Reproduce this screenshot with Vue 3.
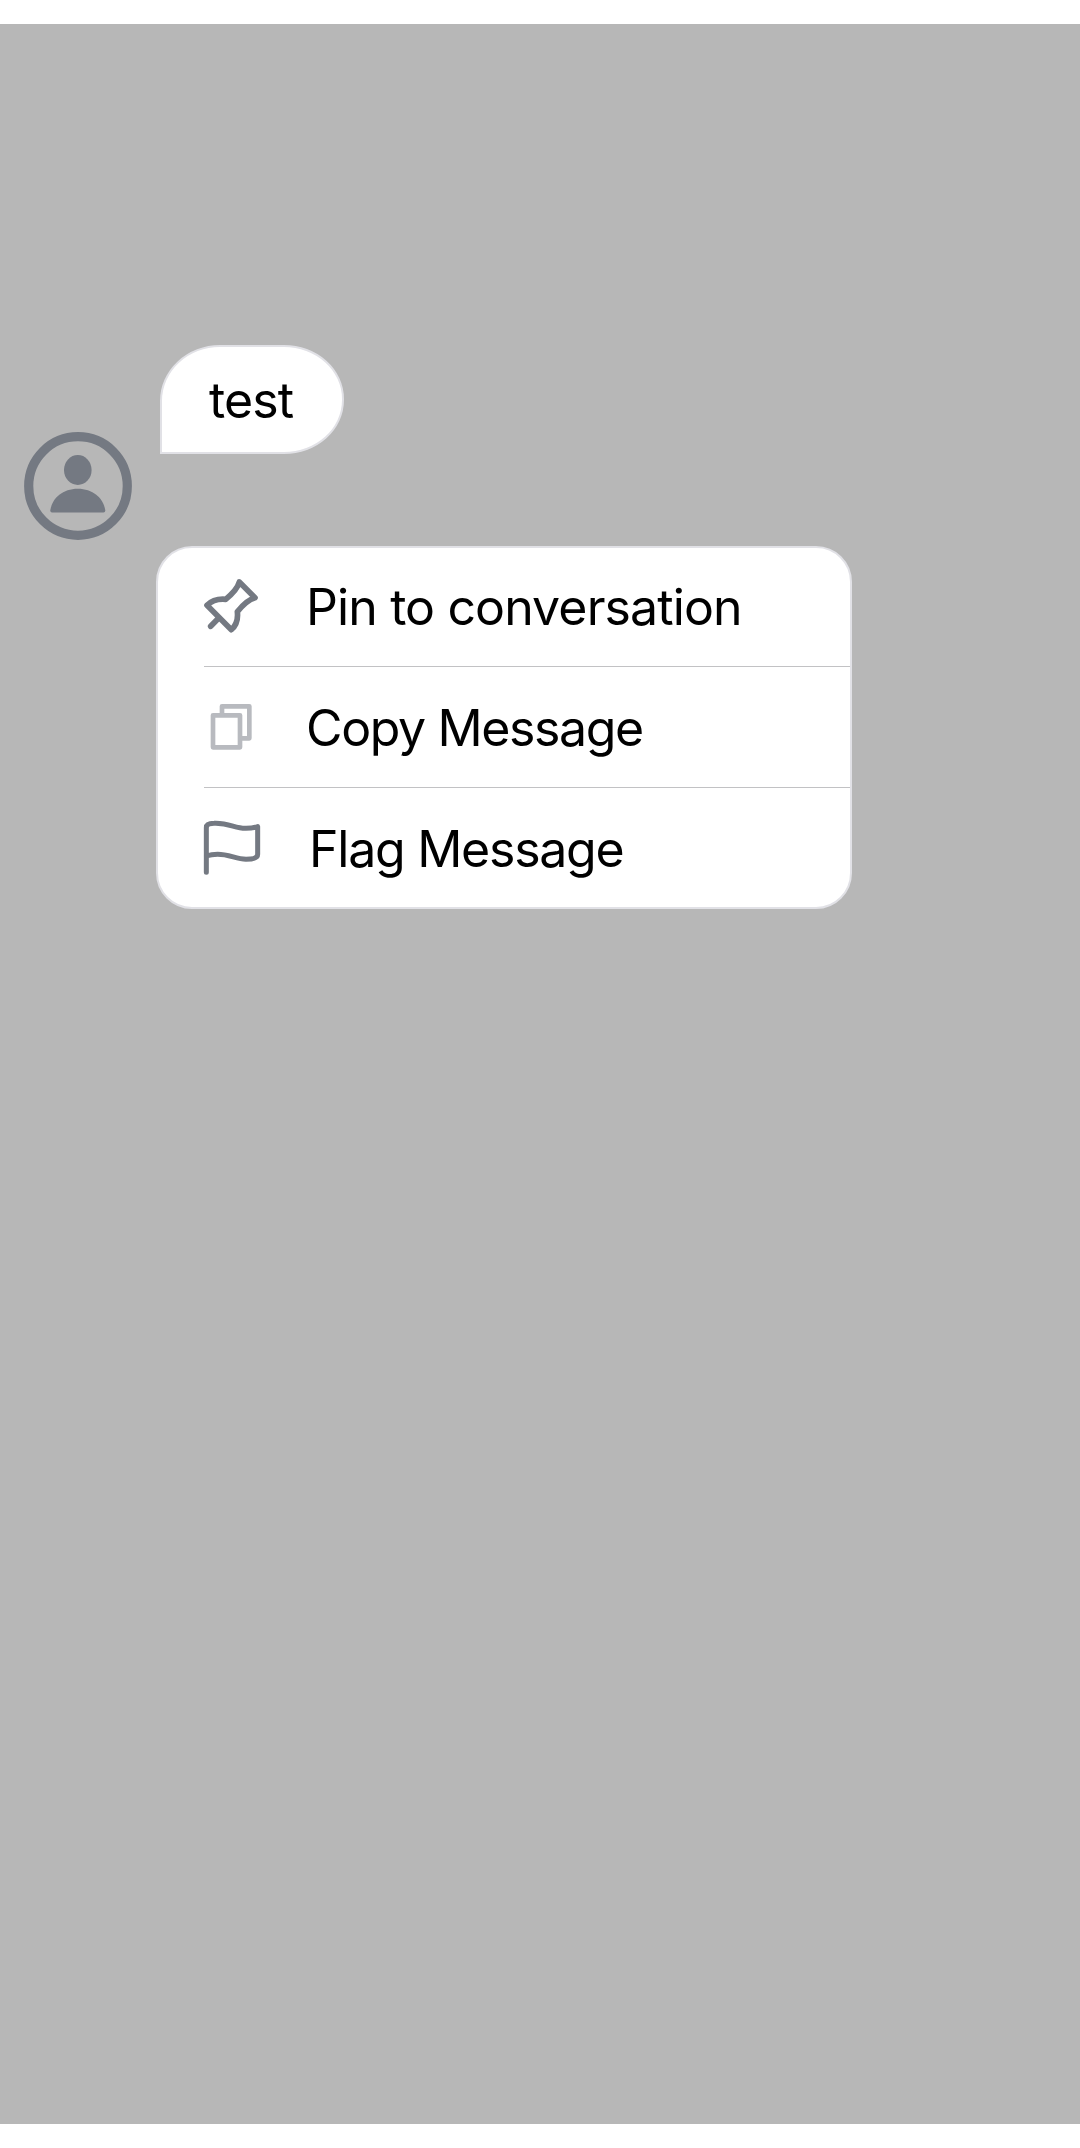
<script setup>
const actions = [
  { id: 'pin', label: 'Pin to conversation' },
  { id: 'copy', label: 'Copy Message' },
  { id: 'flag', label: 'Flag Message' },
]
</script>

<template>
  <main class="screen">
    <section class="overlay">
      <div class="message">
        <svg class="avatar" viewBox="0 0 108 108">
          <circle cx="54" cy="54" r="49.3" fill="none" stroke="#747982" stroke-width="9.2" />
          <ellipse cx="53.8" cy="38" rx="13.8" ry="15" fill="#747982" />
          <path d="M26.3 78.5C28 66 39 56.8 53.8 56.8S79.5 66 81.3 78.5Q81.3 80.5 79.5 80.5H28Q26.3 80.5 26.3 78.5Z" fill="#747982" />
        </svg>
        <div class="bubble">test</div>
      </div>
      <div class="menu">
        <div v-for="a in actions" :key="a.id" class="row" :class="a.id">
          <svg v-if="a.id === 'pin'" class="icon" viewBox="0 0 270 270">
            <g fill="none" stroke="#747982" stroke-width="17" stroke-linejoin="round" stroke-linecap="round">
              <path d="M148 66L195 113Q170 120 142 155Q146 190 124 209L51 136Q72 115 107 118Q142 89 148 66Z" />
              <path d="M84 176L62 199" />
            </g>
          </svg>
          <svg v-else-if="a.id === 'copy'" class="icon" viewBox="0 0 270 270">
            <g fill="none" stroke="#b8babf" stroke-width="14" stroke-linejoin="round">
              <path d="M69 106H150V202H69Z" />
              <path d="M96 106V79H178V175H150" />
            </g>
          </svg>
          <svg v-else class="icon" viewBox="0 0 270 270">
            <path
              d="M49 217V83Q49 70 72 70C118 68 135 86 168 85Q187 85 203 80V163Q203 178 168 178C137 176 116 163 83 163Q64 163 49 168"
              fill="none" stroke="#747982" stroke-width="15" stroke-linejoin="round" stroke-linecap="round"
            />
          </svg>
          <span class="label">{{ a.label }}</span>
        </div>
      </div>
    </section>
  </main>
</template>

<style>
body {
  margin: 0;
  background: #fff;
}
</style>

<style scoped>
.screen {
  box-sizing: border-box;
  width: 1080px;
  height: 2148px;
  padding: 24px 0;
  font-family: Inter, "Liberation Sans", sans-serif;
  font-size: 50px;
  color: #000;
}
.overlay {
  box-sizing: border-box;
  height: 2100px;
  padding-top: 321px;
  background: #b7b7b7;
}
.message {
  display: flex;
  align-items: flex-start;
  height: 195px;
  padding-left: 24px;
}
.avatar {
  flex: none;
  width: 108px;
  height: 108px;
  margin-top: 87px;
}
.bubble {
  box-sizing: border-box;
  width: 184px;
  height: 109px;
  margin-left: 28px;
  padding-left: 47px;
  border: 2px solid #e1e1e6;
  border-radius: 60px 60px 60px 0 / 56px 54px 54px 0;
  background: #fff;
  line-height: 106px;
  letter-spacing: -0.9px;
  white-space: nowrap;
}
.menu {
  box-sizing: border-box;
  width: 696px;
  height: 363px;
  margin: 6px 0 0 156px;
  border: 2px solid #e1e1e6;
  border-radius: 36px;
  background: #fff;
}
.row {
  box-sizing: border-box;
  display: flex;
  align-items: center;
  height: 121px;
  margin-left: 46px;
  border-bottom: 1px solid #c2c2c4;
}
.row:first-child {
  height: 119px;
}
.row:last-child {
  height: 119px;
  border-bottom: 0;
}
.icon {
  flex: none;
  width: 90px;
  height: 90px;
  margin-top: -4px;
  margin-left: -14px;
}
.flag .icon {
  margin-top: -5px;
}
.label {
  margin-left: 26px;
  line-height: 60px;
  letter-spacing: -0.88px;
  white-space: nowrap;
}
.copy .label {
  margin-top: 2px;
  letter-spacing: -1.37px;
}
.flag .label {
  margin-top: 2px;
  margin-left: 29px;
  letter-spacing: -1.25px;
}
</style>
